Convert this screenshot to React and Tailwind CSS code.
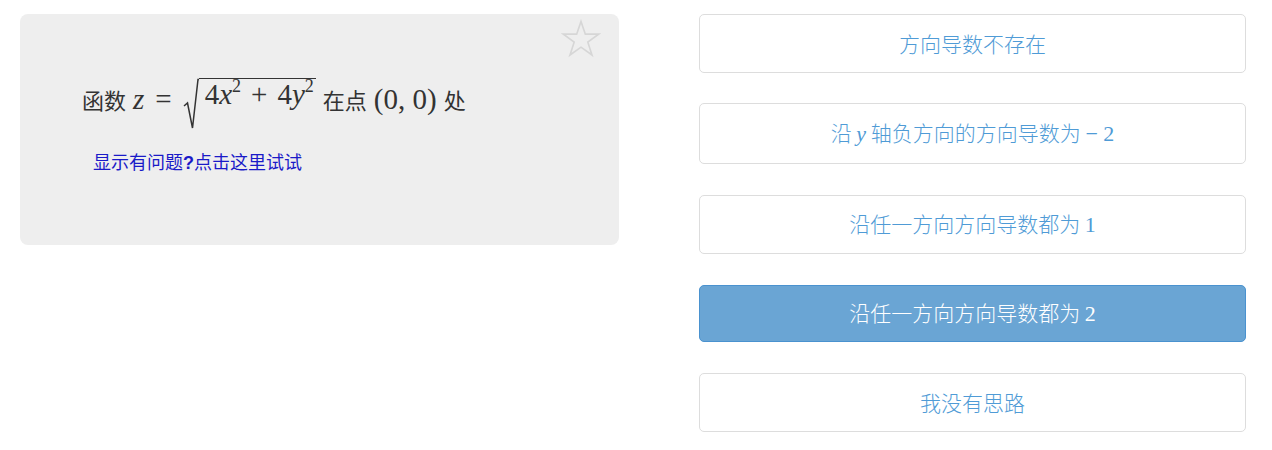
import { useState } from 'react'

const OPTIONS = [
  { key: 'a', h: 'h-[59px]', mt: 'mt-0', label: <>方向导数不存在</> },
  {
    key: 'b',
    h: 'h-[61px]',
    mt: 'mt-[30px]',
    label: (
      <>
        沿 <i className="font-['Liberation_Serif',serif] text-[22px]">y</i> 轴负方向的方向导数为{' '}
        <span className="font-['Liberation_Serif',serif] text-[22px]">− 2</span>
      </>
    ),
  },
  {
    key: 'c',
    h: 'h-[59px]',
    mt: 'mt-[31px]',
    label: (
      <>
        沿任一方向方向导数都为 <span className="font-['Liberation_Serif',serif] text-[22px]">1</span>
      </>
    ),
  },
  {
    key: 'd',
    h: 'h-[57px]',
    mt: 'mt-[31px]',
    label: (
      <>
        沿任一方向方向导数都为 <span className="font-['Liberation_Serif',serif] text-[22px]">2</span>
      </>
    ),
  },
  { key: 'e', h: 'h-[59px]', mt: 'mt-[31px]', label: <>我没有思路</> },
]

function Star() {
  return (
    <svg width="40" height="40" viewBox="0 0 24 24" fill="none" stroke="#d6d6d6" strokeWidth="1" strokeLinejoin="miter">
      <path d="M12 1.5l2.6 7.6h8l-6.5 4.8 2.5 7.7L12 16.9l-6.6 4.7 2.5-7.7-6.5-4.8h8z" />
    </svg>
  )
}

function Sqrt({ children }) {
  return (
    <span className="inline-flex items-stretch">
      <svg width="16" height="52" viewBox="0 0 16 52" className="-mb-[10px] self-end">
        <path d="M1 28 L4.5 25 L9.5 50 L15 1.5 L16 1.5" fill="none" stroke="#333" strokeWidth="1.5" />
      </svg>
      <span className="border-t-[1.5px] border-[#333] pt-[1px] pl-[6px] pr-[2px]">{children}</span>
    </span>
  )
}

export default function App() {
  const [selected, setSelected] = useState('d')

  return (
    <div className="w-[1272px] h-[450px] bg-white flex items-start gap-[80px] pl-[20px] pt-[14px] font-['Noto_Sans_CJK_SC',sans-serif]">
      <div className="relative w-[599px] h-[231px] rounded-[8px] bg-[#eeeeee] pl-[62px] pt-[64px]">
        <div className="absolute right-[18px] top-[5px]">
          <Star />
        </div>
        <div className="flex items-center text-[22px] text-[#333] leading-none gap-[7px]">
          <span>函数</span>
          <span className="font-['Liberation_Serif',serif] text-[29px] flex items-center gap-[11px]">
            <i>z</i>
            <span>=</span>
            <Sqrt>
              4<i>x</i>
              <sup className="text-[18px] -top-[12px]">2</sup>
              <span className="mx-[10px]">+</span>4<i>y</i>
              <sup className="text-[18px] -top-[12px]">2</sup>
            </Sqrt>
          </span>
          <span>在点</span>
          <span className="font-['Liberation_Serif',serif] text-[29px]">(0, 0)</span>
          <span>处</span>
        </div>
        <a href="#" className="block mt-[32px] ml-[11px] text-[18px] text-[#1a1ac8] leading-none">
          显示有问题<b className="font-['Liberation_Sans',sans-serif]">?</b>点击这里试试
        </a>
      </div>

      <div className="w-[547px] flex flex-col">
        {OPTIONS.map((o) => {
          const active = selected === o.key
          return (
            <button
              key={o.key}
              type="button"
              onClick={() => setSelected(o.key)}
              className={`${o.h} ${o.mt} rounded-[5px] border text-[21px] font-light flex items-center justify-center ${
                active
                  ? 'bg-[#6aa5d4] border-[#4a92cf] text-white'
                  : 'bg-white border-[#dddddd] text-[#4f9bd6]'
              }`}
            >
              <span>{o.label}</span>
            </button>
          )
        })}
      </div>
    </div>
  )
}
